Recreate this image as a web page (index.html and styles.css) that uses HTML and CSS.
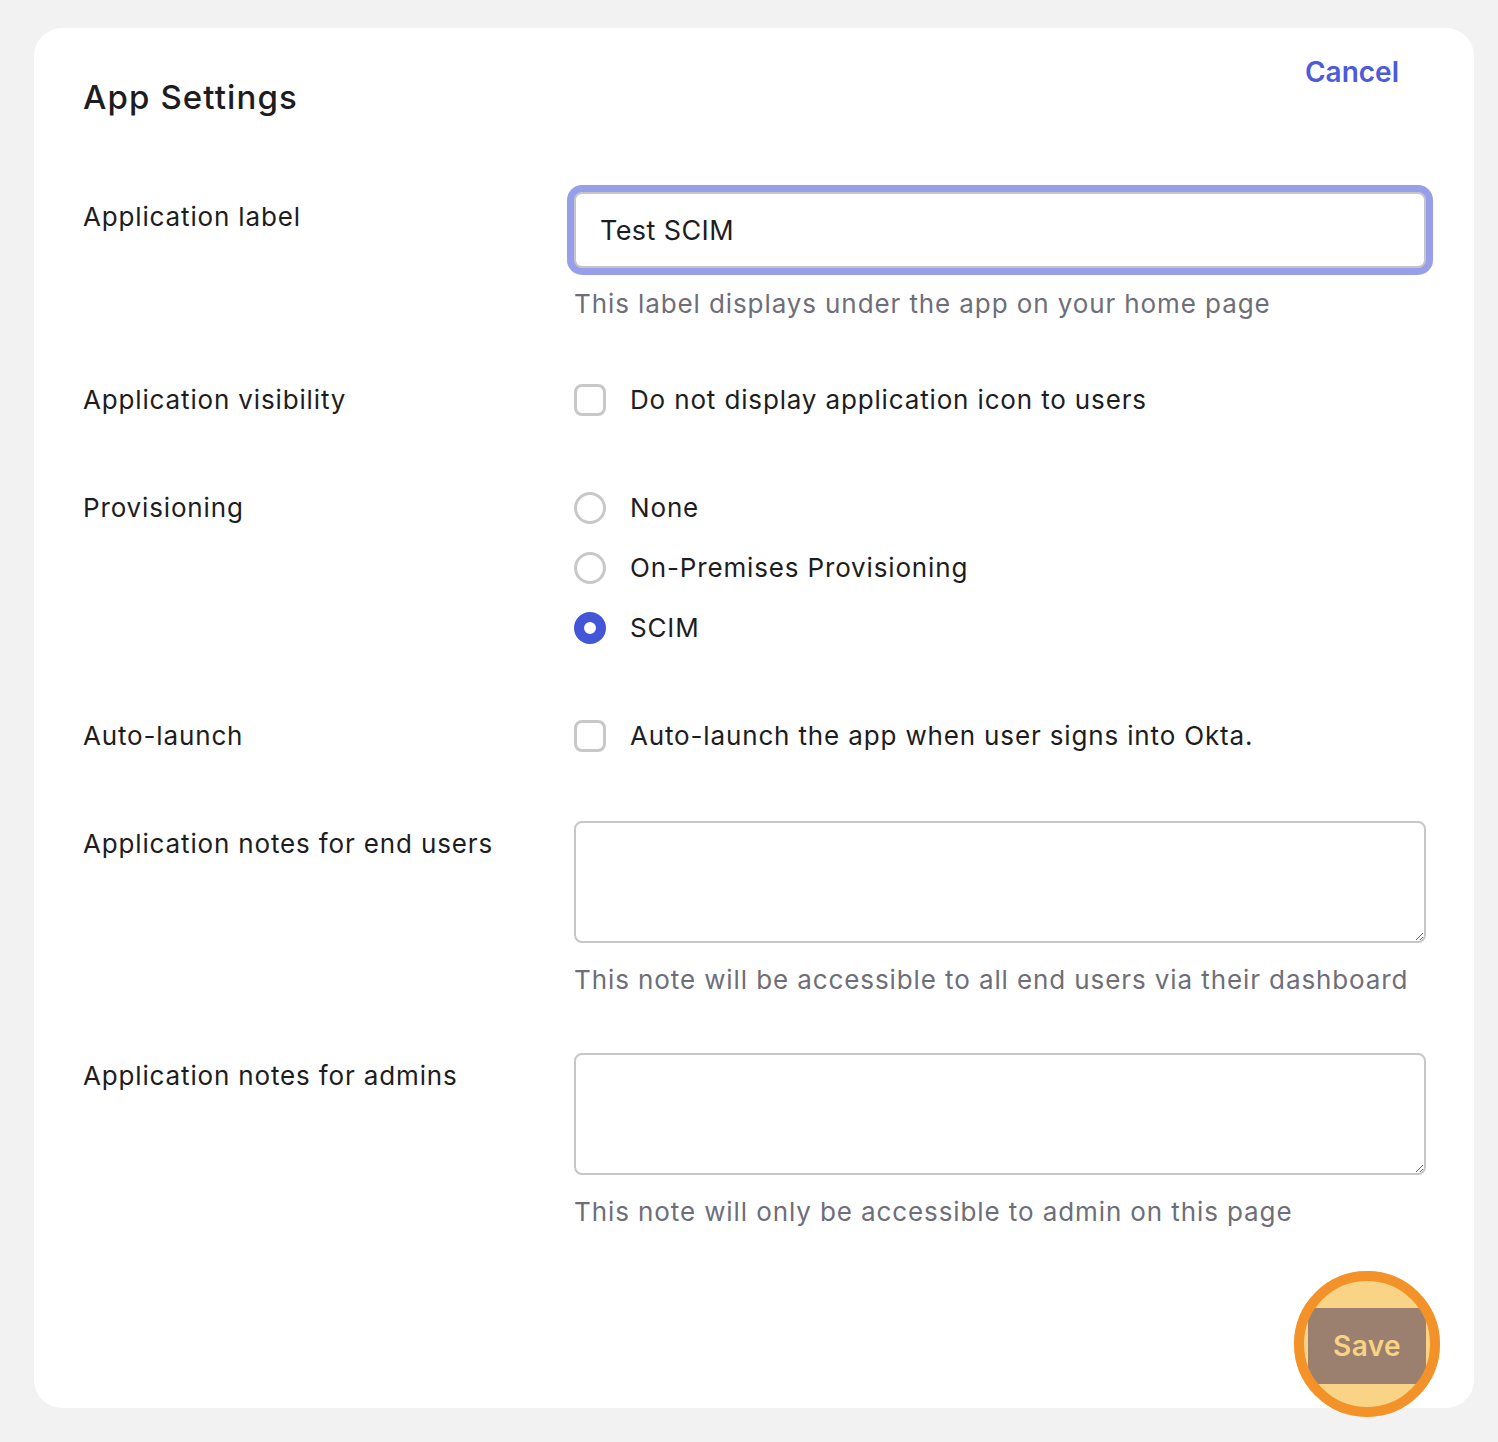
FILE: index.html
```html
<!DOCTYPE html>
<html lang="en">

<head>
  <meta charset="UTF-8" />
  <meta name="viewport" content="width=device-width, initial-scale=1.0" />
  <title>App Settings</title>
  <link rel="stylesheet" href="styles.css">
</head>

<body>
  <div class="card">
    <header class="card-head">
      <h1>App Settings</h1>
      <a href="#" class="cancel">Cancel</a>
    </header>

    <form class="settings">
      <div class="row">
        <label for="appLabel" class="field-label">Application label</label>
        <div class="field">
          <input type="text" id="appLabel" class="text-input" value="Test SCIM" />
          <p class="hint">This label displays under the app on your home page</p>
        </div>
      </div>

      <div class="row row-visibility">
        <span class="field-label">Application visibility</span>
        <div class="field">
          <label class="option">
            <input type="checkbox" class="box" />
            <span>Do not display application icon to users</span>
          </label>
        </div>
      </div>

      <div class="row row-gap">
        <span class="field-label">Provisioning</span>
        <div class="field radios">
          <label class="option">
            <input type="radio" name="prov" class="dot" />
            <span>None</span>
          </label>
          <label class="option">
            <input type="radio" name="prov" class="dot" />
            <span>On-Premises Provisioning</span>
          </label>
          <label class="option">
            <input type="radio" name="prov" class="dot" checked />
            <span>SCIM</span>
          </label>
        </div>
      </div>

      <div class="row row-gap">
        <span class="field-label">Auto-launch</span>
        <div class="field">
          <label class="option">
            <input type="checkbox" class="box" />
            <span>Auto-launch the app when user signs into Okta.</span>
          </label>
        </div>
      </div>

      <div class="row row-notes">
        <label for="userNotes" class="field-label label-area">Application notes for end users</label>
        <div class="field">
          <textarea id="userNotes" class="area"></textarea>
          <p class="hint hint-area">This note will be accessible to all end users via their dashboard</p>
        </div>
      </div>

      <div class="row row-admin">
        <label for="adminNotes" class="field-label label-area">Application notes for admins</label>
        <div class="field">
          <textarea id="adminNotes" class="area"></textarea>
          <p class="hint hint-area">This note will only be accessible to admin on this page</p>
        </div>
      </div>

      <div class="actions">
        <div class="save-wrap">
          <button type="submit" class="save">Save</button>
        </div>
      </div>
    </form>
  </div>
</body>

</html>
```

FILE: styles.css
```css
*,
*::before,
*::after {
  box-sizing: border-box;
}

body {
  margin: 0;
  padding: 28px 24px 34px 34px;
  background: #f2f2f2;
  font-family: Inter, "Noto Sans", sans-serif;
  color: #1d1d21;
}

.card {
  width: 1440px;
  height: 1380px;
  background: #fff;
  border-radius: 28px;
  padding: 26px 48px 24px 49px;
}

.card-head {
  display: flex;
  justify-content: space-between;
  align-items: flex-start;
}

.card-head h1 {
  margin: 23px 0 0;
  font-size: 33px;
  line-height: 40px;
  font-weight: 500;
  letter-spacing: 1.1px;
}

.cancel {
  margin-right: 27px;
  font-size: 28px;
  line-height: 36px;
  font-weight: 600;
  color: #4b5bdc;
  text-decoration: none;
}

.settings {
  margin-top: 75px;
}

.row {
  display: grid;
  grid-template-columns: 491px 1fr;
}

.row-visibility {
  margin-top: 60px;
}

.row-gap {
  margin-top: 72px;
}

.row-notes {
  margin-top: 67px;
}

.row-admin {
  margin-top: 55px;
}

.field-label {
  font-size: 26px;
  line-height: 36px;
  letter-spacing: 0.85px;
  padding-top: 7px;
}

.row-visibility .field-label,
.row-gap .field-label {
  padding-top: 0;
}

.label-area {
  padding-top: 5px;
}

.text-input {
  display: block;
  width: 100%;
  height: 76px;
  padding: 0 24px;
  border: 2px solid #c6c6c6;
  border-radius: 8px;
  box-shadow: 0 0 0 7px #979fea;
  font: inherit;
  font-size: 27px;
  letter-spacing: 0.4px;
  color: #1d1d21;
  outline: none;
}

.hint {
  margin: 18px 0 0;
  font-size: 26px;
  line-height: 36px;
  letter-spacing: 0.9px;
  color: #6e6e78;
}

.hint-area {
  margin-top: 19px;
}

.radios {
  display: flex;
  flex-direction: column;
  gap: 24px;
}

.option {
  display: flex;
  align-items: center;
  gap: 24px;
  font-size: 26px;
  line-height: 36px;
  letter-spacing: 0.85px;
}

.option input {
  appearance: none;
  margin: 0;
  width: 32px;
  height: 32px;
  flex-shrink: 0;
  border: 3px solid #c8c8c8;
  background: #fff;
}

.box {
  border-radius: 8px;
}

.dot {
  border-radius: 50%;
}

.dot:checked {
  border: 10px solid #4456d8;
  background: #fff;
}

.area {
  display: block;
  width: 100%;
  height: 122px;
  border: 2px solid #c6c6c6;
  border-radius: 8px;
  resize: vertical;
  font: inherit;
  font-size: 26px;
}

.actions {
  display: flex;
  justify-content: flex-end;
  margin-top: 78px;
}

.save-wrap {
  position: relative;
  isolation: isolate;
}

.save-wrap::before,
.save-wrap::after {
  content: "";
  position: absolute;
  left: 50%;
  top: 50%;
  width: 146px;
  height: 146px;
  margin: -75px 0 0 -73px;
  border-radius: 50%;
  pointer-events: none;
}

.save-wrap::before {
  background: #f9d386;
  z-index: -1;
}

.save-wrap::after {
  border: 10px solid #f39228;
  z-index: 1;
}

.save {
  display: block;
  width: 118px;
  height: 76px;
  border: none;
  border-radius: 6px;
  background: #9b7f6f;
  color: #f9d384;
  font: inherit;
  font-size: 28px;
  font-weight: 600;
  letter-spacing: 0.4px;
  cursor: pointer;
}
```
